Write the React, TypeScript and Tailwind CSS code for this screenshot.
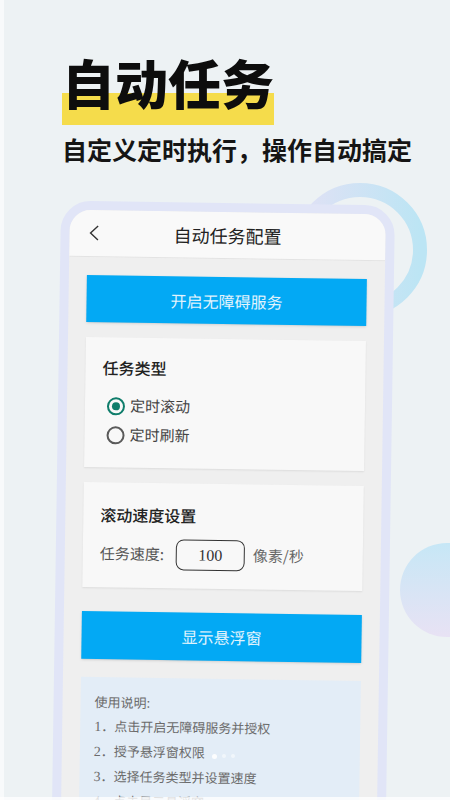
import React from "react";

const steps = [
  "点击开启无障碍服务并授权",
  "授予悬浮窗权限",
  "选择任务类型并设置速度",
  "点击显示悬浮窗",
];

const Radio = ({ checked, label }: { checked?: boolean; label: string }) => (
  <div className="flex h-[29px] items-center gap-[5px] pl-[5px]">
    {checked ? (
      <span className="flex h-[18px] w-[18px] items-center justify-center rounded-full border-2 border-[#0f7d6b]">
        <span className="h-[8px] w-[8px] rounded-full bg-[#0f7d6b]" />
      </span>
    ) : (
      <span className="h-[18px] w-[18px] rounded-full border-2 border-[#5a5a5a]" />
    )}
    <span className="text-[15px] text-[#444]">{label}</span>
  </div>
);

const App = () => {
  return (
    <div className="relative h-[800px] w-[450px] overflow-hidden bg-[#edf2f4] font-['Noto_Sans_CJK_SC',sans-serif]">
      {/* background decorations */}
      <div className="absolute left-0 top-0 h-full w-[4px] bg-white/60" />
      <svg className="absolute left-[293px] top-[183px]" width="134" height="134" viewBox="0 0 134 134">
        <defs>
          <linearGradient id="ring" x1="0" y1="0" x2="1" y2="0">
            <stop offset="0" stopColor="#e1e1f5" />
            <stop offset="1" stopColor="#bce5f4" />
          </linearGradient>
        </defs>
        <circle cx="67" cy="67" r="60" fill="none" stroke="url(#ring)" strokeWidth="14" />
      </svg>
      <div className="absolute left-[400px] top-[543px] h-[94px] w-[94px] rounded-full bg-gradient-to-b from-[#c6e7f6] to-[#e8e2f4]" />

      <div className="relative z-10 flex flex-col pl-[62px] pt-[56px]">
        <h1 className="self-start bg-[linear-gradient(to_bottom,transparent_37px,#f5dc4b_37px)] pb-[16px] text-[53px] font-black leading-none text-[#0d0d0d]">
          自动任务
        </h1>
        <p className="mt-[12px] text-[25px] font-bold leading-none text-[#151515]">
          自定义定时执行，操作自动搞定
        </p>

        {/* phone mockup */}
        <div className="ml-[-1px] mt-[41px] h-[660px] w-[334px] origin-top rotate-[0.85deg] rounded-[30px] border-[9px] border-[#e1e5f7] bg-[#efefef]">
          <div className="h-full overflow-hidden rounded-[21px]">
            <div className="flex h-[47px] items-center border-b border-[#e3e3e3] bg-[#f9f9f9]">
              <div className="w-[50px] pl-[19px]">
                <svg width="11" height="16" viewBox="0 0 11 16">
                  <path d="M9.5 1 L2 8 L9.5 15" stroke="#333" strokeWidth="1.4" fill="none" />
                </svg>
              </div>
              <div className="flex-1 text-center text-[18px] text-[#222]">自动任务配置</div>
              <div className="w-[50px]" />
            </div>

            <div className="px-[18px] pt-[18px]">
              <button className="h-[47px] w-full bg-[#03a9f4] text-[16px] text-[#e2f4fd] shadow-sm">
                开启无障碍服务
              </button>

              <div className="mt-[15px] h-[130px] bg-[#f8f8f8] pl-[17px] pt-[18px] shadow-[0_1px_2px_rgba(0,0,0,0.08)]">
                <div className="text-[16px] font-medium leading-[24px] text-[#222]">任务类型</div>
                <div className="mt-[12px]">
                  <Radio checked label="定时滚动" />
                  <Radio label="定时刷新" />
                </div>
              </div>

              <div className="mt-[15px] h-[105px] bg-[#f8f8f8] pl-[17px] pt-[20px] shadow-[0_1px_2px_rgba(0,0,0,0.08)]">
                <div className="text-[16px] font-medium leading-[24px] text-[#222]">滚动速度设置</div>
                <div className="mt-[12px] flex h-[31px] items-center">
                  <span className="text-[15px] text-[#555]">任务速度:</span>
                  <div className="ml-[12px] flex h-[31px] w-[69px] items-center justify-center rounded-[8px] border-[1.5px] border-[#333] font-['Liberation_Serif',serif] text-[16px] text-[#333]">
                    100
                  </div>
                  <span className="ml-[8px] text-[15px] text-[#666]">像素/秒</span>
                </div>
              </div>

              <button className="mt-[24px] h-[48px] w-full bg-[#03a9f4] text-[16px] text-[#e2f4fd] shadow-sm">
                显示悬浮窗
              </button>

              <div className="mt-[18px] bg-[#e3edf7] pb-[20px] pl-[14px] pt-[13px] text-[13px] leading-[24px] text-[#6b6b6b]">
                <div>使用说明:</div>
                {steps.map((s, i) => (
                  <div key={s}>
                    <span className="font-['Liberation_Serif',serif] text-[14px]">{i + 1}</span>．{s}
                  </div>
                ))}
              </div>
            </div>
          </div>
        </div>
      </div>

      {/* carousel dots */}
      <div className="absolute left-[212px] top-[754px] z-20 flex gap-[5px]">
        <span className="h-[5px] w-[5px] rounded-full bg-white/90" />
        <span className="h-[4px] w-[4px] rounded-full bg-white/50" />
        <span className="h-[4px] w-[4px] rounded-full bg-white/50" />
      </div>
      <div className="absolute bottom-0 left-0 z-20 h-[3px] w-full bg-white/80" />
    </div>
  );
};

export default App;
